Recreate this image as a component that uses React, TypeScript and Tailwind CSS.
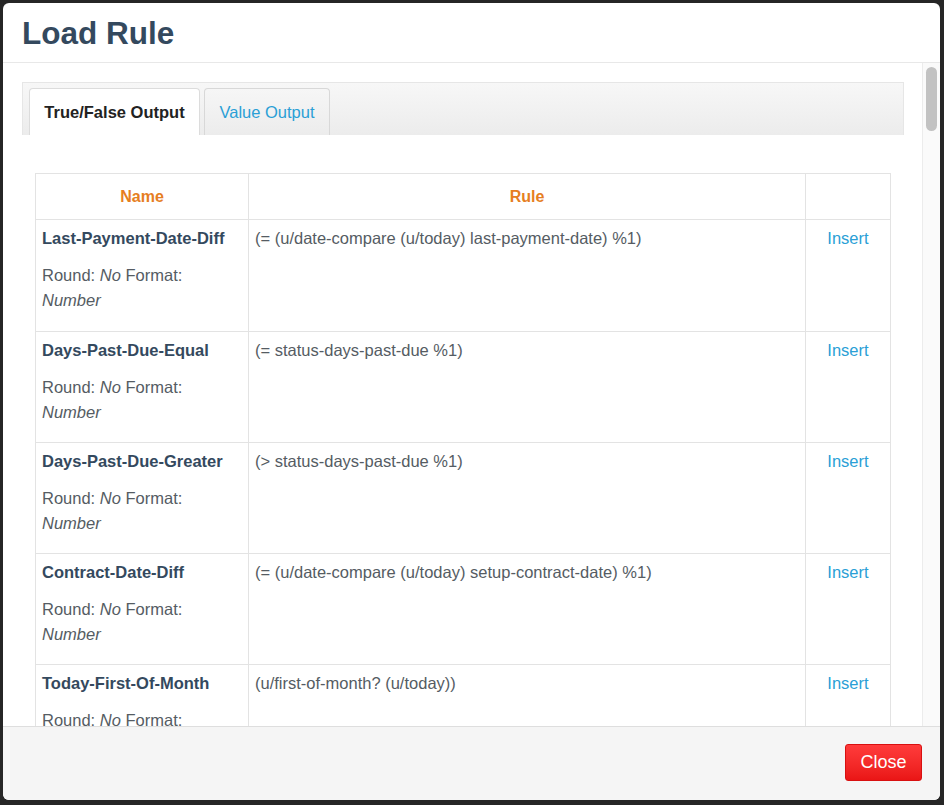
const rules = [
  {
    name: "Last-Payment-Date-Diff",
    rule: "(= (u/date-compare (u/today) last-payment-date) %1)",
  },
  { name: "Days-Past-Due-Equal", rule: "(= status-days-past-due %1)" },
  { name: "Days-Past-Due-Greater", rule: "(> status-days-past-due %1)" },
  {
    name: "Contract-Date-Diff",
    rule: "(= (u/date-compare (u/today) setup-contract-date) %1)",
  },
  { name: "Today-First-Of-Month", rule: "(u/first-of-month? (u/today))" },
];

function RuleRow({
  name,
  rule,
  first,
}: {
  name: string;
  rule: string;
  first: boolean;
}) {
  return (
    <tr>
      <td className="border border-[#e3e3e3] px-[6px] pt-[8px] pb-[8px] align-top">
        <div className="text-[16.5px] font-bold leading-[20px] text-[#34495e]">
          {name}
        </div>
        <p
          className={
            first
              ? "mt-[15px] mb-[10px] max-w-[190px] text-[16.5px] leading-[25px] text-[#555c63]"
              : "mt-[15px] mb-[9px] max-w-[190px] text-[16.5px] leading-[25px] text-[#555c63]"
          }
        >
          Round: <em>No</em> Format: <em>Number</em>
        </p>
      </td>
      <td className="border border-[#e3e3e3] px-[6px] pt-[8px] align-top text-[16.5px] leading-[20px] text-[#555c63]">
        {rule}
      </td>
      <td className="border border-[#e3e3e3] pt-[8px] text-center align-top text-[16.5px] leading-[20px]">
        <a className="cursor-pointer text-[#2a9fd6]">Insert</a>
      </td>
    </tr>
  );
}

export default function App() {
  return (
    <div
      className="h-[805px] w-[944px] overflow-hidden bg-[#262626] pt-[3px] pl-[3px]"
      style={{ fontFamily: '"Liberation Sans", Arial, sans-serif' }}
    >
      <div className="flex h-[797px] w-[937px] flex-col overflow-hidden rounded-[6px] bg-white">
        <div className="h-[60px] shrink-0 border-b border-[#e8e8e8] px-[19px] pt-[12px]">
          <h1 className="text-[31.5px] font-bold leading-[36px] text-[#34495e]">
            Load Rule
          </h1>
        </div>

        <div className="flex min-h-0 flex-1">
          <div className="min-w-0 flex-1 overflow-hidden pt-[19px] pl-[19px] pr-[18px]">
            <div className="flex h-[53px] items-end border border-b-0 border-[#e6e6e6] bg-gradient-to-b from-[#f7f7f7] to-[#ececec] pl-[6px]">
              <div className="flex h-[47px] w-[171px] items-center justify-center rounded-t-[4px] border border-b-0 border-[#dcdcdc] bg-white text-[16.5px] font-bold text-[#222]">
                True/False Output
              </div>
              <div className="ml-[4px] flex h-[47px] w-[126px] items-center justify-center rounded-t-[4px] border border-b-0 border-[#d8d8d8] bg-gradient-to-b from-[#f6f6f6] to-[#ececec] text-[16.5px] text-[#2a9fd6]">
                Value Output
              </div>
            </div>

            <div className="px-[13px] pt-[38px]">
              <table className="w-[855px] table-fixed border-collapse">
                <colgroup>
                  <col className="w-[213px]" />
                  <col className="w-[557px]" />
                  <col className="w-[85px]" />
                </colgroup>
                <thead>
                  <tr>
                    <th className="h-[46px] border border-[#e3e3e3] text-center text-[16px] font-bold text-[#e67e22]">
                      Name
                    </th>
                    <th className="h-[46px] border border-[#e3e3e3] text-center text-[16px] font-bold text-[#e67e22]">
                      Rule
                    </th>
                    <th className="h-[46px] border border-[#e3e3e3]"></th>
                  </tr>
                </thead>
                <tbody>
                  {rules.map((r, i) => (
                    <RuleRow
                      key={r.name}
                      name={r.name}
                      rule={r.rule}
                      first={i === 0}
                    />
                  ))}
                </tbody>
              </table>
            </div>
          </div>

          <div className="w-[18px] shrink-0 border-l border-[#ececec] bg-[#fafafa] pt-[4px] pl-[3px]">
            <div className="h-[64px] w-[11px] rounded-full bg-[#c2c2c2]"></div>
          </div>
        </div>

        <div className="flex h-[74px] shrink-0 items-start justify-end border-t border-[#dedede] bg-[#f5f5f5] pt-[17px] pr-[18px]">
          <button
            type="button"
            className="h-[37px] w-[77px] rounded-[3px] border border-[#d81010] bg-gradient-to-b from-[#ff3b3b] to-[#ea1515] text-[18px] text-white"
          >
            Close
          </button>
        </div>
      </div>
    </div>
  );
}
